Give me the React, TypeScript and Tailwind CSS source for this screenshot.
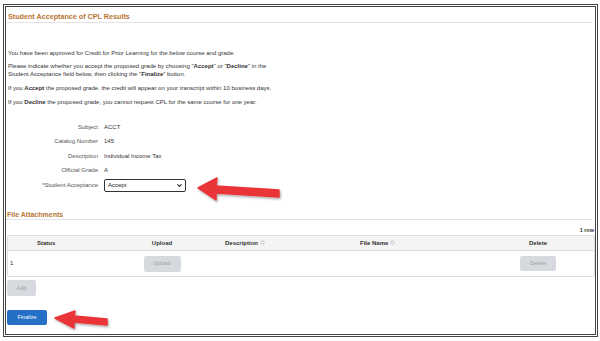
import React from 'react';
import { ChevronDown } from 'lucide-react';

const fields = [
  { label: 'Subject', value: 'ACCT' },
  { label: 'Catalog Number', value: '145' },
  { label: 'Description', value: 'Individual Income Tax' },
  { label: 'Official Grade', value: 'A' },
];

const SortMark = () => (
  <svg width="5" height="5" viewBox="0 0 10 10" className="inline-block ml-[2px] align-middle">
    <circle cx="5" cy="5" r="3.5" fill="none" stroke="#bbb" strokeWidth="1.5" />
  </svg>
);

const GrayButton: React.FC<{ label: string; className?: string }> = ({ label, className }) => (
  <div
    className={`flex items-center justify-center rounded-[2px] bg-[#d6dade] text-[5.5px] text-[#9aa0a6] ${className ?? ''}`}
  >
    {label}
  </div>
);

const App: React.FC = () => {
  return (
    <div className="relative w-[600px] h-[341px] bg-white pt-[4px] pl-[3px] font-['Liberation_Sans',Arial,sans-serif] text-[#333]">
      <div className="w-[595px] h-[333px] border-[3px] border-double border-[#444]">
        {/* Header */}
        <div className="pt-[5px] pl-[1px] mr-[2px] border-b border-[#e4e4e4]">
          <div className="pl-[1px] leading-[10px] text-[7.2px] font-bold text-[#b87533]">
            Student Acceptance of CPL Results
          </div>
        </div>

        {/* Intro text */}
        <div className="pl-[2px] text-[6px] leading-[8px] text-[#333]">
          <p className="mt-[26px]">
            You have been approved for Credit for Prior Learning for the below course and grade.
          </p>
          <p className="mt-[5px] w-[272px]">
            Please indicate whether you accept the proposed grade by choosing "<b>Accept</b>" or "<b>Decline</b>" in the
            Student Acceptance field below, then clicking the "<b>Finalize</b>" button.
          </p>
          <p className="mt-[6px]">
            If you <b>Accept</b> the proposed grade, the credit will appear on your transcript within 10 business days.
          </p>
          <p className="mt-[6px]">
            If you <b>Decline</b> the proposed grade, you cannot request CPL for the same course for one year.
          </p>
        </div>

        {/* Fields */}
        <div className="mt-[14px] text-[6px]">
          {fields.map((f) => (
            <div key={f.label} className="flex items-center h-[14.5px]">
              <div className="w-[92px] text-right text-[#555]">{f.label}</div>
              <div className="ml-[6px] text-[#333]">{f.value}</div>
            </div>
          ))}
          <div className="flex items-center h-[14px]">
            <div className="w-[92px] text-right text-[#555]">*Student Acceptance</div>
            <div className="ml-[6px] w-[82px] h-[13px] flex items-center justify-between rounded-[2px] border-[1.5px] border-[#333] bg-white pl-[3px] pr-[2px]">
              <span className="text-[#222]">Accept</span>
              <ChevronDown size={7} strokeWidth={3.5} color="#222" />
            </div>
          </div>
        </div>

        {/* File Attachments */}
        <div className="mt-[19px] mr-[2px] border-b border-[#e4e4e4]">
          <div className="pl-[1px] leading-[8px] text-[7px] font-bold text-[#b87533]">File Attachments</div>
        </div>
        <div className="mt-[6px] pr-[1px] text-right leading-[8px] text-[5.5px] font-bold text-[#333]">1 row</div>

        <div className="mt-[1px] ml-[1px] w-[588px] rounded-[2px] border border-[#dedede] text-[6px]">
          <div className="grid grid-cols-[110px_88px_126px_150px_1fr] h-[15px] items-center bg-[#f4f4f4] border-b border-[#dedede] font-bold text-[#333]">
            <div className="pl-[29px]">Status</div>
            <div className="text-center">Upload</div>
            <div className="pl-[19px]">
              Description
              <SortMark />
            </div>
            <div className="pl-[28px]">
              File Name
              <SortMark />
            </div>
            <div className="text-center">Delete</div>
          </div>
          <div className="grid grid-cols-[110px_88px_126px_150px_1fr] h-[25px] items-center bg-white">
            <div className="pl-[2px] text-[#222]">1</div>
            <div className="flex justify-center">
              <GrayButton label="Upload" className="w-[37px] h-[16px]" />
            </div>
            <div />
            <div />
            <div className="flex justify-center">
              <GrayButton label="Delete" className="w-[36px] h-[15px]" />
            </div>
          </div>
        </div>

        <div className="mt-[3px] ml-[1px]">
          <GrayButton label="Add" className="w-[29px] h-[16px]" />
        </div>

        <div className="mt-[14px] ml-[1px] w-[40px] h-[15px] flex items-center justify-center rounded-[2px] bg-[#2470c6] text-[5.5px] text-white">
          Finalize
        </div>
      </div>

      {/* Red annotation arrows */}
      <svg
        width="600"
        height="341"
        viewBox="0 0 600 341"
        className="absolute left-0 top-0 pointer-events-none"
      >
        <defs>
          <filter id="shadow" x="-20%" y="-40%" width="140%" height="180%">
            <feDropShadow dx="1" dy="1.5" stdDeviation="1" floodColor="#000" floodOpacity="0.35" />
          </filter>
        </defs>
        <path
          d="M198 188 L217 178 L216 186 L279 190 L279 197 L216 193 L216 200 Z"
          fill="#ea3439"
          stroke="#ea3439"
          strokeWidth="1.5"
          strokeLinejoin="round"
          filter="url(#shadow)"
        />
        <path
          d="M55 318 L75 311 L74 316 L107 319 L107 325 L74 322 L74 328 Z"
          fill="#ea3439"
          stroke="#ea3439"
          strokeWidth="1.5"
          strokeLinejoin="round"
          filter="url(#shadow)"
        />
      </svg>
    </div>
  );
};

export default App;
